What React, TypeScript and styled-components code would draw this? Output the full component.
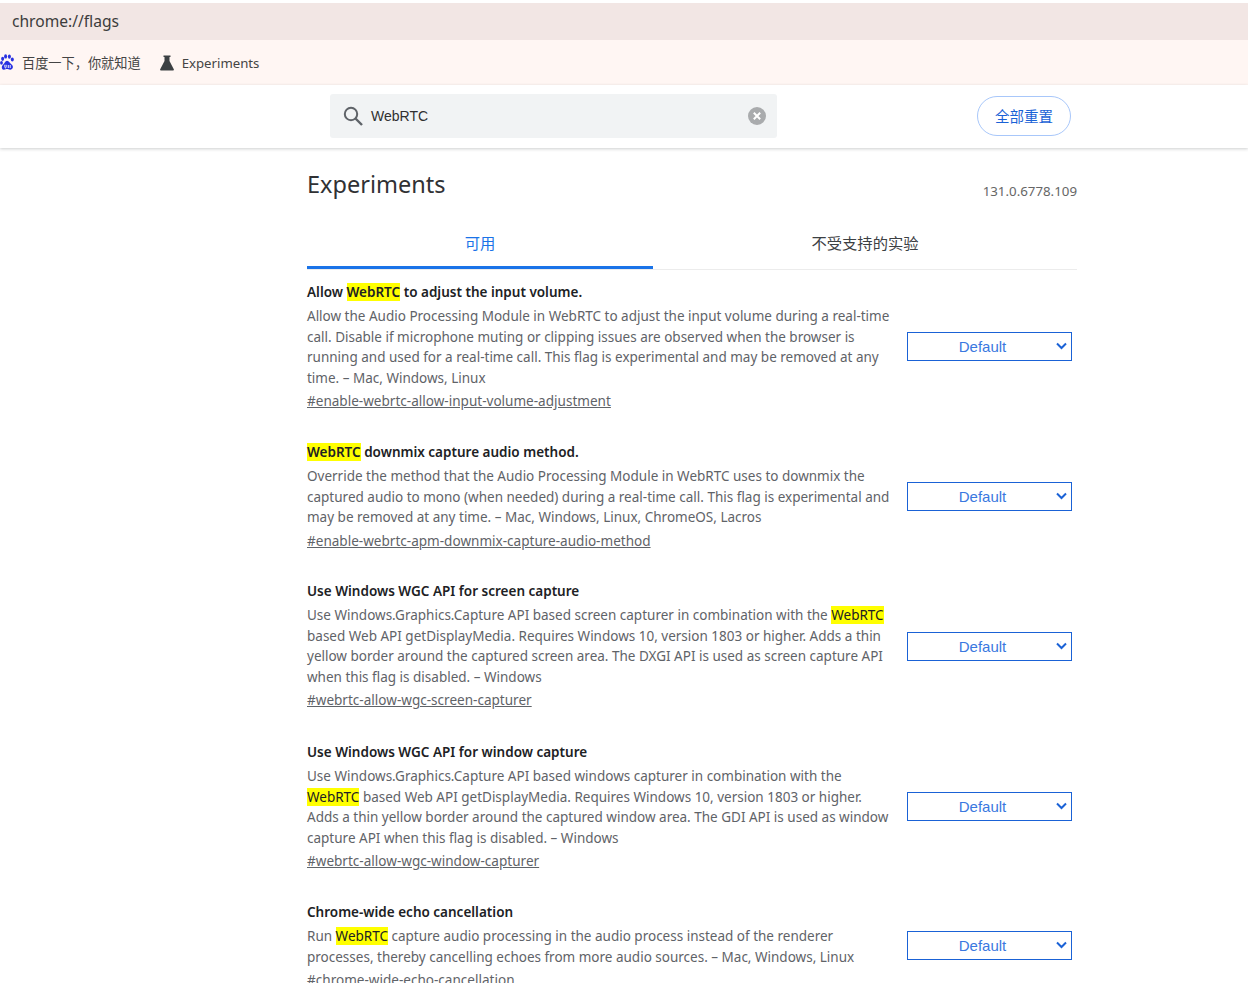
import React from 'react';
import styled, { createGlobalStyle } from 'styled-components';

const UI_FONT = '"Noto Sans", "Noto Sans CJK SC", sans-serif';

const GlobalStyle = createGlobalStyle`
  html, body {
    margin: 0;
    padding: 0;
    height: 983px;
    overflow: hidden;
    background: #fff;
    font-family: ${UI_FONT};
  }
`;

const Page = styled.div`
  width: 1248px;
  height: 983px;
  overflow: hidden;
  padding-top: 3px;
  box-sizing: border-box;
`;

const AddressBar = styled.div`
  height: 37px;
  background: #f2e6e4;
  display: flex;
  align-items: center;
  padding: 0 0 1px 12px;
  box-sizing: border-box;
  font-size: 15.6px;
  color: #3c3c3c;
`;

const Bookmarks = styled.div`
  height: 45px;
  background: #fff6f3;
  display: flex;
  align-items: center;
  font-size: 13.2px;
  color: #444;
`;

const Bookmark = styled.div`
  display: flex;
  align-items: center;
  gap: 8px;
  margin-right: 19px;
`;

const SearchHeader = styled.div`
  height: 63px;
  background: #fff;
  box-shadow: 0 1px 3px rgba(60, 64, 67, 0.25);
  position: relative;
  display: flex;
  align-items: flex-start;
  padding: 9px 177px 0 330px;
  box-sizing: border-box;
  justify-content: space-between;
`;

const SearchBox = styled.div`
  width: 447px;
  height: 44px;
  background: #f1f3f4;
  border-radius: 3px;
  display: flex;
  align-items: center;
  padding: 0 11px 0 13px;
  box-sizing: border-box;
  font-family: "Liberation Sans", Arial, sans-serif;
  font-size: 14px;
  color: #303030;
`;

const SearchText = styled.span`
  flex: 1;
  margin-left: 8px;
`;

const ResetButton = styled.div`
  width: 94px;
  height: 40px;
  margin-top: 2px;
  padding-bottom: 2px;
  box-sizing: border-box;
  border: 1px solid #a8c7fa;
  border-radius: 20px;
  display: flex;
  align-items: center;
  justify-content: center;
  color: #1a62d6;
  font-size: 14.5px;
`;

const Content = styled.div`
  width: 770px;
  margin-left: 307px;
`;

const TitleRow = styled.div`
  display: flex;
  justify-content: space-between;
  height: 69px;
`;

const Title = styled.h1`
  margin: 18px 0 0;
  font-size: 23.5px;
  line-height: 36px;
  font-weight: 400;
  color: #303134;
`;

const Version = styled.span`
  margin-top: 33px;
  font-size: 13.3px;
  line-height: 20px;
  color: #666;
`;

const Tabs = styled.div`
  display: flex;
  height: 52px;
  margin-bottom: 12px;
  border-bottom: 1px solid #ececec;
`;

const Tab = styled.div<{ $active?: boolean; $width: number }>`
  width: ${(p) => p.$width}px;
  box-sizing: border-box;
  height: ${(p) => (p.$active ? '52px' : '51px')};
  padding-top: 16px;
  text-align: center;
  font-size: 15.3px;
  line-height: 20px;
  color: ${(p) => (p.$active ? '#1a73e8' : '#3c4043')};
  border-bottom: ${(p) => (p.$active ? '3px solid #1a73e8' : 'none')};
`;

const Experiment = styled.div<{ $height: number }>`
  display: flex;
  height: ${(p) => p.$height}px;
`;

const ExperimentText = styled.div`
  width: 600px;
  flex-shrink: 0;
`;

const Name = styled.h2`
  margin: 0 0 3px;
  font-size: 13.5px;
  line-height: 21px;
  font-weight: 600;
  color: #202124;
`;

const Description = styled.p`
  margin: 0 0 3px;
  font-size: 13.5px;
  line-height: 20.6px;
  color: #5f6368;
  white-space: pre;
`;

const Permalink = styled.a`
  display: block;
  font-size: 13.55px;
  line-height: 21px;
  color: #5f6368;
  text-decoration: underline;
`;

const Match = styled.mark`
  background: #ffff00;
  color: #202124;
`;

const SelectBox = styled.div`
  width: 165px;
  height: 29px;
  box-sizing: border-box;
  border: 1px solid #1a62d6;
  position: relative;
  display: flex;
  align-items: center;
  justify-content: center;
  padding-right: 14px;
  font-family: "Liberation Sans", Arial, sans-serif;
  font-size: 15px;
  color: #3a78e0;
`;

const SelectArrow = styled.svg`
  position: absolute;
  right: 4px;
  top: 9px;
`;

const SelectCell = styled.div<{ $top: number }>`
  padding-top: ${(p) => p.$top}px;
`;

const BaiduIcon = () => (
  <svg width="14" height="17" viewBox="0 0 14 17">
    <g fill="#2932e1">
      <ellipse cx="2.600" cy="4.800" rx="1.500" ry="2.100" />
      <ellipse cx="5.600" cy="2.400" rx="1.500" ry="2.200" />
      <ellipse cx="9.400" cy="2.600" rx="1.500" ry="2.200" />
      <ellipse cx="12.300" cy="5.600" rx="1.500" ry="2" />
      <ellipse cx="1.500" cy="8.800" rx="1.400" ry="1.900" />
      <path d="M7 6.800c2.100 0 2.800 2.500 4.900 4 1.900 1.500 1.100 5-1.800 4.900-1.300 0-2-.6-3.100-.6s-1.900.7-3.300.6C1.600 15.600 1.100 12.300 3 10.700 4.800 9.300 5.100 6.800 7 6.800z" />
    </g>
    <path d="M4.800 10.800v2c0 1.500 1.400 1.500 1.400 0v-2M8.300 11v3M10.200 11v3" stroke="#fff" strokeWidth="0.900" fill="none" />
  </svg>
);

const FlaskIcon = () => (
  <svg width="14" height="16" viewBox="0 0 14 16">
    <path d="M3.500 .5h7V2H9.500v4l4.300 8.300c.3.700 0 1.200-.7 1.200H.9c-.7 0-1-.5-.7-1.200L4.500 6V2h-1z" fill="#3c4043" />
  </svg>
);

const SearchIcon = () => (
  <svg width="20" height="20" viewBox="0 0 20 20" fill="none" stroke="#5f6368" strokeWidth="2">
    <circle cx="8" cy="8" r="6.200" />
    <path d="M12.500 12.500L19 19" strokeWidth="2.400" />
  </svg>
);

const ClearIcon = () => (
  <svg width="18" height="18" viewBox="0 0 18 18">
    <circle cx="9" cy="9" r="9" fill="#a9abad" />
    <path d="M5.800 5.800l6.400 6.400M12.200 5.800l-6.400 6.400" stroke="#fff" strokeWidth="2" />
  </svg>
);

const Chevron = () => (
  <SelectArrow width="11" height="8" viewBox="0 0 11 8" fill="none">
    <path d="M1 1.500l4.500 4.500L10 1.500" stroke="#1a62d6" strokeWidth="2" />
  </SelectArrow>
);

type Flag = {
  name: React.ReactNode;
  lines: React.ReactNode[];
  link: string;
  height: number;
  selectTop: number;
};

const W = () => <Match>WebRTC</Match>;

const FLAGS: Flag[] = [
  {
    name: <>Allow <W /> to adjust the input volume.</>,
    lines: [
      'Allow the Audio Processing Module in WebRTC to adjust the input volume during a real-time',
      'call. Disable if microphone muting or clipping issues are observed when the browser is',
      'running and used for a real-time call. This flag is experimental and may be removed at any',
      'time. – Mac, Windows, Linux',
    ],
    link: '#enable-webrtc-allow-input-volume-adjustment',
    height: 160,
    selectTop: 50,
  },
  {
    name: <><W /> downmix capture audio method.</>,
    lines: [
      'Override the method that the Audio Processing Module in WebRTC uses to downmix the',
      'captured audio to mono (when needed) during a real-time call. This flag is experimental and',
      'may be removed at any time. – Mac, Windows, Linux, ChromeOS, Lacros',
    ],
    link: '#enable-webrtc-apm-downmix-capture-audio-method',
    height: 139,
    selectTop: 40,
  },
  {
    name: 'Use Windows WGC API for screen capture',
    lines: [
      <>Use Windows.Graphics.Capture API based screen capturer in combination with the <W /></>,
      'based Web API getDisplayMedia. Requires Windows 10, version 1803 or higher. Adds a thin',
      'yellow border around the captured screen area. The DXGI API is used as screen capture API',
      'when this flag is disabled. – Windows',
    ],
    link: '#webrtc-allow-wgc-screen-capturer',
    height: 161,
    selectTop: 51,
  },
  {
    name: 'Use Windows WGC API for window capture',
    lines: [
      'Use Windows.Graphics.Capture API based windows capturer in combination with the',
      <><W /> based Web API getDisplayMedia. Requires Windows 10, version 1803 or higher.</>,
      'Adds a thin yellow border around the captured window area. The GDI API is used as window',
      'capture API when this flag is disabled. – Windows',
    ],
    link: '#webrtc-allow-wgc-window-capturer',
    height: 160,
    selectTop: 50,
  },
  {
    name: 'Chrome-wide echo cancellation',
    lines: [
      <>Run <W /> capture audio processing in the audio process instead of the renderer</>,
      'processes, thereby cancelling echoes from more audio sources. – Mac, Windows, Linux',
    ],
    link: '#chrome-wide-echo-cancellation',
    height: 100,
    selectTop: 29,
  },
];

const App: React.FC = () => (
  <Page>
    <GlobalStyle />
    <AddressBar>chrome://flags</AddressBar>
    <Bookmarks>
      <Bookmark>
        <BaiduIcon />
        百度一下，你就知道
      </Bookmark>
      <Bookmark>
        <FlaskIcon />
        Experiments
      </Bookmark>
    </Bookmarks>
    <SearchHeader>
      <SearchBox>
        <SearchIcon />
        <SearchText>WebRTC</SearchText>
        <ClearIcon />
      </SearchBox>
      <ResetButton>全部重置</ResetButton>
    </SearchHeader>
    <Content>
      <TitleRow>
        <Title>Experiments</Title>
        <Version>131.0.6778.109</Version>
      </TitleRow>
      <Tabs>
        <Tab $active $width={346}>可用</Tab>
        <Tab $width={424}>不受支持的实验</Tab>
      </Tabs>
      {FLAGS.map((flag) => (
        <Experiment key={flag.link} $height={flag.height}>
          <ExperimentText>
            <Name>{flag.name}</Name>
            <Description>
              {flag.lines.map((line, n) => (
                <React.Fragment key={n}>
                  {line}
                  {n < flag.lines.length - 1 && <br />}
                </React.Fragment>
              ))}
            </Description>
            <Permalink href={flag.link}>{flag.link}</Permalink>
          </ExperimentText>
          <SelectCell $top={flag.selectTop}>
            <SelectBox>
              Default
              <Chevron />
            </SelectBox>
          </SelectCell>
        </Experiment>
      ))}
    </Content>
  </Page>
);

export default App;
